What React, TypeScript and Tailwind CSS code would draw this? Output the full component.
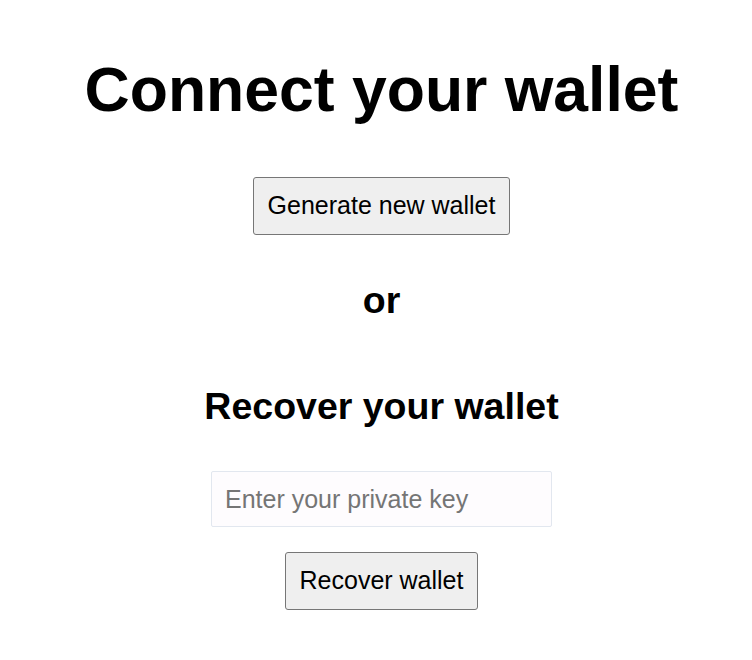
export default function App() {
  return (
    <div
      className="flex flex-col items-center bg-white text-black min-h-[660px] pl-[11px]"
      style={{ fontFamily: '"Liberation Sans", Arial, sans-serif' }}
    >
      <h1 className="mt-[52px] text-[62.5px] font-bold leading-[74px]">Connect your wallet</h1>
      <button className="mt-[51px] h-[58px] px-[14px] text-[25px] bg-[#efefef] border border-[#767676] rounded-[3px]">
        Generate new wallet
      </button>
      <h2 className="mt-[44px] text-[37.5px] font-bold leading-[42px]">or</h2>
      <h2 className="mt-[64px] text-[37.5px] font-bold leading-[42px]">Recover your wallet</h2>
      <input
        className="mt-[44px] w-[341px] h-[56px] px-[13px] text-[25px] bg-[#fefcfe] border border-[#e2e7ef] rounded-[2px] placeholder:text-[#757575] outline-none"
        placeholder="Enter your private key"
      />
      <button className="mt-[25px] h-[58px] px-[14px] text-[25px] bg-[#efefef] border border-[#767676] rounded-[3px]">
        Recover wallet
      </button>
    </div>
  )
}
